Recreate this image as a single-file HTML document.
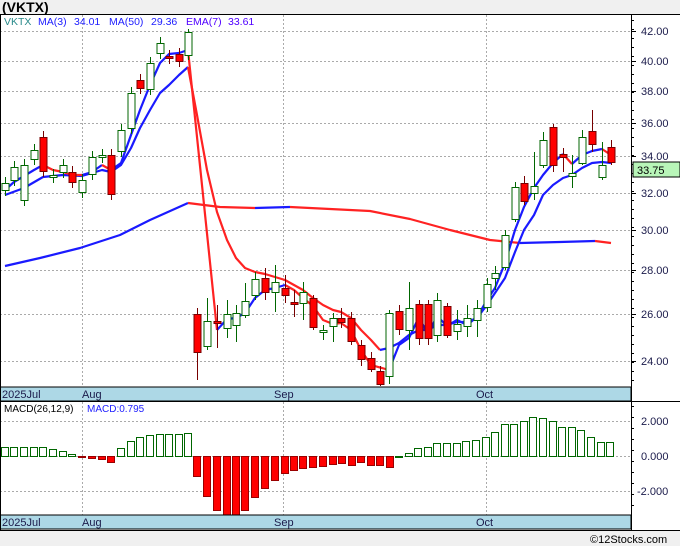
<!DOCTYPE html>
<html><head><meta charset="utf-8"><style>
body{margin:0;width:680px;height:546px;background:#f0f0f0;overflow:hidden;font-family:"Liberation Sans",sans-serif}
svg{position:absolute;left:0;top:0}
</style></head><body>
<svg id="s" width="680" height="546" xmlns="http://www.w3.org/2000/svg" font-family="Liberation Sans, sans-serif">
<rect x="0" y="14" width="680" height="516" fill="#fff"/>
<text x="2" y="12" font-size="14" font-weight="bold" fill="#000">(VKTX)</text>
<g id="grid" stroke="#aaa" stroke-dasharray="2,2" stroke-width="1"></g>
<g id="ma"></g>
<g id="c"></g>
<g id="m"></g>
<rect x="0" y="387" width="631" height="14" fill="#add8e6" stroke="#000"/>
<rect x="0" y="515" width="631" height="14" fill="#add8e6" stroke="#000"/>
<line x1="0" y1="14.5" x2="680" y2="14.5" stroke="#000"/>
<line x1="0.5" y1="14" x2="0.5" y2="530" stroke="#000"/>
<line x1="631.5" y1="14" x2="631.5" y2="530" stroke="#000"/>
<line x1="0" y1="401.5" x2="680" y2="401.5" stroke="#000"/>
<line x1="0" y1="530.5" x2="680" y2="530.5" stroke="#000"/>
<g font-size="11" fill="#1a1a4a">
<text x="2" y="398">2025Jul</text><text x="82" y="398">Aug</text><text x="274" y="398">Sep</text><text x="476" y="398">Oct</text>
<text x="2" y="526">2025Jul</text><text x="82" y="526">Aug</text><text x="274" y="526">Sep</text><text x="476" y="526">Oct</text>
</g>
<g font-size="10.5"><text x="4" y="25" fill="#2a8a8a">VKTX</text><text x="38" y="25" fill="#2020ff">MA(3)</text><text x="74" y="25" fill="#2020ff">34.01</text><text x="109" y="25" fill="#2020ff">MA(50)</text><text x="151" y="25" fill="#2020ff">29.36</text><text x="186" y="25" fill="#5000ff">EMA(7)</text><text x="228" y="25" fill="#5000ff">33.61</text></g>
<g font-size="10"><text x="4" y="412" fill="#000">MACD(26,12,9)</text><text x="87" y="412" fill="#2020ff">MACD:0.795</text></g>
<g id="ax" font-size="11" fill="#1a1a4a"></g>
<rect x="633" y="162" width="47" height="15" fill="#b8f5b8" stroke="#000"/>
<text x="637" y="174" font-size="11" fill="#000">33.75</text>
<text x="590" y="543" font-size="11" fill="#000">©12Stocks.com</text>
</svg>
<script>
var NS="http://www.w3.org/2000/svg";
function el(p,t,a){var e=document.createElementNS(NS,t);for(var k in a)e.setAttribute(k,a[k]);document.getElementById(p).appendChild(e);return e;}
var lv=[[42,31],[40,61],[38,91],[36,123],[34,156],[32,193],[30,230],[28,270],[26,314],[24,361]];
lv.forEach(function(l){el('grid','line',{x1:0,x2:631,y1:l[1]+.5,y2:l[1]+.5});var t=el('ax','text',{x:641,y:l[1]+4});t.textContent=l[0].toFixed(2);el('ax','line',{x1:631,x2:636,y1:l[1]+.5,y2:l[1]+.5,stroke:'#000'});});
for(var y=20;y<387;y+=9)el('ax','line',{x1:631,x2:634,y1:y+.5,y2:y+.5,stroke:'#000'});
[[421,'2.000'],[456,'0.000'],[491,'-2.000']].forEach(function(l){el('grid','line',{x1:0,x2:631,y1:l[0]+.5,y2:l[0]+.5});var t=el('ax','text',{x:l[1][0]=='-'?637:641,y:l[0]+4});t.textContent=l[1];});
for(var y=406;y<515;y+=11)el('ax','line',{x1:631,x2:634,y1:y+.5,y2:y+.5,stroke:'#000'});
[82.5,283.5,486.5].forEach(function(x){el('grid','line',{x1:x,x2:x,y1:15,y2:387});el('grid','line',{x1:x,x2:x,y1:402,y2:515});});
// candles: x, top, bottom, red?, high, low
var C=[[5,183,190,0],[14,167,180,0],[24,165,200,0],[34,150,159,0],[43,137,171,1],[53,175,177,0],[63,165,172,0],[72,172,182,1],[82,180,192,0],[92,157,174,0],[102,155,157,0],[111,155,194,1],[121,130,151,0],[131,93,128,0],[140,80,88,1],[150,63,89,0],[160,43,53,0],[169,56,58,1],[179,54,61,1],[188,32,55,0,29,60],
[197,314,352,1,308,380],[207,321,346,0,298,350],[217,321,323,1,305,348],[227,314,328,0,300,338],[236,313,325,0,305,342],[245,301,315,0,283,318],[255,279,295,0,272,300],[265,278,292,1,268,300],[275,282,292,0,265,312],[285,288,295,1,275,303],[294,302,304,1,290,317],[303,292,303,0,282,320],[313,298,327,1,295,330],[323,330,332,0,325,340],[333,318,326,0,313,342],[341,318,322,1,308,328],[351,318,341,1,312,345],[361,345,359,1,340,366],[371,358,369,1,352,372],[380,371,384,1,366,386],[389,313,376,0,310,384],
[399,311,329,1,305,335],[409,308,330,0,282,350],[419,304,338,1,300,345],[428,304,338,1,300,345],[437,300,335,0,293,342],[447,306,335,1,303,338],[457,324,331,0,310,340],[467,318,326,0,305,337],[477,308,320,0,300,337],[487,284,307,0,278,312],[495,273,278,0,266,290],[505,235,267,0,230,270],[515,187,219,0,182,222],[524,183,201,1,176,205],[534,186,193,0,152,200],[543,140,165,0,132,168],[553,127,165,1,124,172],[563,154,157,1,148,172],[572,173,176,0,155,188],[582,137,163,0,130,165],[592,131,144,1,110,152],[602,165,177,0,142,180],[611,147,162,1,140,165]];
C.forEach(function(c){var hi=c[4]||c[1]-6,lo=c[5]||c[2]+6,col=c[3]?'#700':'#060';
el('c','line',{x1:c[0]+.5,x2:c[0]+.5,y1:hi,y2:lo,stroke:col});
var h=Math.max(1,c[2]-c[1]);el('c','rect',{x:c[0]-3,y:c[1]+.5,width:7,height:h,fill:c[3]?'#f00':'#fff',stroke:c[3]?'#700':'#060'});});
function pl(pts,col){el('ma','polyline',{points:pts.map(function(p){return p.join(',')}).join(' '),fill:'none',stroke:col,'stroke-width':2.2,'stroke-linejoin':'round'});}
pl([[5,266],[40,258],[80,248],[120,235],[150,220],[188,203]],'#1a1aff');
pl([[188,203],[220,207],[255,208]],'#f22');pl([[255,208],[290,207]],'#1a1aff');
pl([[290,207],[330,209],[370,211],[410,219],[450,230],[490,240],[520,243]],'#f22');
pl([[520,243],[560,242],[595,241]],'#1a1aff');pl([[595,241],[611,243]],'#f22');
pl([[5,195],[24,188],[43,177],[63,175],[82,176],[102,170],[111,172],[121,165],[131,148],[140,128],[150,110],[160,93],[169,85],[179,75],[188,67]],'#1a1aff');
pl([[188,67],[197,115],[207,170],[217,212],[227,240],[236,258],[245,268],[255,272],[265,274],[275,277],[285,280],[294,285],[303,290],[313,298],[323,305],[333,310],[341,312],[351,318],[361,330],[371,340],[380,350]],'#f22');
pl([[380,350],[389,348],[399,343],[409,335],[419,330],[428,330],[437,325],[447,325],[457,322],[467,322],[477,318],[487,305],[495,293],[505,278],[515,252],[524,230],[534,215],[543,195],[553,185],[563,178],[572,175],[582,168],[592,163],[602,162],[611,163]],'#1a1aff');
pl([[5,190],[14,182],[24,176],[34,170],[43,165]],'#1a1aff');pl([[43,165],[53,170],[63,172],[72,175],[82,175]],'#f22');
pl([[82,175],[92,172],[102,165]],'#1a1aff');pl([[102,165],[111,170]],'#f22');
pl([[111,170],[121,163],[131,135],[140,110],[150,85],[160,63],[169,54],[179,53],[188,50]],'#1a1aff');
pl([[188,50],[217,330]],'#f22');
pl([[217,330],[227,319],[236,318],[245,313],[255,298],[265,290],[275,288],[285,285]],'#1a1aff');
pl([[285,285],[294,290],[303,298],[313,306],[323,320],[333,324],[341,323],[351,330],[361,350],[371,365],[389,370]],'#f22');
pl([[389,370],[399,345],[409,338],[419,317],[428,335],[437,316],[447,326],[457,320],[467,325],[477,317],[487,300],[495,288],[505,263],[515,230],[524,207],[534,188],[543,175],[553,163],[563,154]],'#1a1aff');
pl([[563,154],[572,164]],'#f22');pl([[572,164],[582,155],[592,151],[602,149]],'#1a1aff');pl([[602,149],[611,155]],'#f22');
// macd: x, top-y (value end)
var M=[[5,447],[14,447],[24,447],[34,447],[43,447],[53,449],[63,451],[72,454],[82,457],[92,458],[102,459],[111,462],[121,448],[131,441],[140,437],[150,435],[160,434],[169,434],[179,434],[188,433],
[197,476],[207,496],[217,510],[227,515],[236,515],[245,510],[255,497],[265,488],[275,480],[285,473],[294,470],[303,468],[313,467],[323,466],[333,464],[342,463],[352,465],[361,462],[371,465],[380,465],[390,467],
[399,456],[409,453],[418,448],[428,447],[437,443],[447,443],[457,443],[466,441],[476,440],[486,437],[495,432],[505,424],[514,424],[524,421],[533,417],[543,418],[553,421],[562,427],[572,427],[581,430],[591,437],[601,442],[610,442]];
M.forEach(function(m){var red=m[1]>456;var y1=red?456:m[1],h=Math.max(1,Math.abs(m[1]-456));
el('m','rect',{x:m[0]-3.5,y:y1+.5,width:7,height:h,fill:red?'#f00':'#fff',stroke:red?'#900':'#060'});});
</script>
</body></html>
